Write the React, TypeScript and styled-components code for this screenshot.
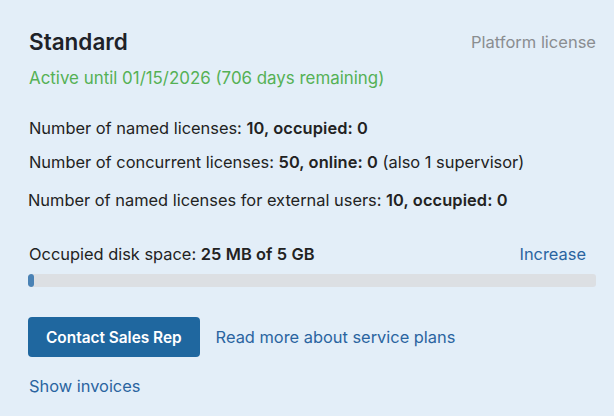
import React from "react";
import styled, { createGlobalStyle } from "styled-components";

const Global = createGlobalStyle`
  html, body { margin: 0; padding: 0; background: #e3eef8; }
  body { font-family: Inter, "Noto Sans", sans-serif; color: #222; }
`;

const Card = styled.div`
  box-sizing: border-box;
  width: 614px;
  height: 416px;
  padding: 28px 18px 0 29px;
  display: flex;
  flex-direction: column;
`;

const Header = styled.div`
  display: flex;
  justify-content: space-between;
  align-items: center;
`;

const Title = styled.div`
  font-size: 22.5px;
  font-weight: 600;
  color: #1e2228;
  line-height: 28px;
`;

const Muted = styled.div`
  font-size: 16.5px;
  line-height: 22px;
  color: #8a8d90;
  margin-top: -1px;
`;

const Active = styled.div`
  margin-top: 11px;
  font-size: 16.9px;
  color: #55b155;
  line-height: 22px;
`;

const Stats = styled.div`
  margin-top: 27px;
  display: flex;
  flex-direction: column;
`;

const Line = styled.div<{ $shift?: number; $top?: number }>`
  font-size: 16.4px;
  line-height: 24px;
  color: #222;
  margin-left: ${(p) => p.$shift ?? 0}px;
  margin-top: ${(p) => p.$top ?? 0}px;
  b { font-weight: 600; letter-spacing: 0.1px; }
`;

const DiskRow = styled.div`
  margin-top: 30px;
  display: flex;
  justify-content: space-between;
  align-items: baseline;
  padding-right: 10px;
`;

const Link = styled.a`
  font-size: 16.4px;
  line-height: 22px;
  color: #2a64a0;
  text-decoration: none;
  cursor: pointer;
`;

const Track = styled.div`
  margin-top: 8px;
  margin-left: -1px;
  height: 13px;
  background: #dcdfe3;
  border-radius: 3px;
  overflow: hidden;
`;

const Fill = styled.div`
  height: 100%;
  background: #4a82b5;
  border-radius: 3px;
`;

const Actions = styled.div`
  margin-top: 30px;
  margin-left: -1px;
  display: flex;
  align-items: center;
  gap: 16px;
`;

const Button = styled.button`
  height: 40px;
  padding: 0 18px;
  border: none;
  border-radius: 4px;
  background: #1f679f;
  color: #fff;
  font-family: Inter, sans-serif;
  font-size: 15.4px;
  font-weight: 600;
  cursor: pointer;
`;

const Footer = styled.div`
  margin-top: 18px;
`;

export default function App() {
  return (
    <>
      <Global />
      <Card>
        <Header>
          <Title>Standard</Title>
          <Muted>Platform license</Muted>
        </Header>
        <Active>Active until 01/15/2026 (706 days remaining)</Active>
        <Stats>
          <Line>
            Number of named licenses: <b>10, occupied: 0</b>
          </Line>
          <Line $top={10}>
            Number of concurrent licenses: <b>50, online: 0</b> (also 1 supervisor)
          </Line>
          <Line $top={14} $shift={-1}>
            Number of named licenses for external users: <b>10, occupied: 0</b>
          </Line>
        </Stats>
        <DiskRow>
          <Line>
            Occupied disk space: <b>25 MB of 5 GB</b>
          </Line>
          <Link>Increase</Link>
        </DiskRow>
        <Track>
          <Fill style={{ width: "6px" }} />
        </Track>
        <Actions>
          <Button>Contact Sales Rep</Button>
          <Link>Read more about service plans</Link>
        </Actions>
        <Footer>
          <Link>Show invoices</Link>
        </Footer>
      </Card>
    </>
  );
}
